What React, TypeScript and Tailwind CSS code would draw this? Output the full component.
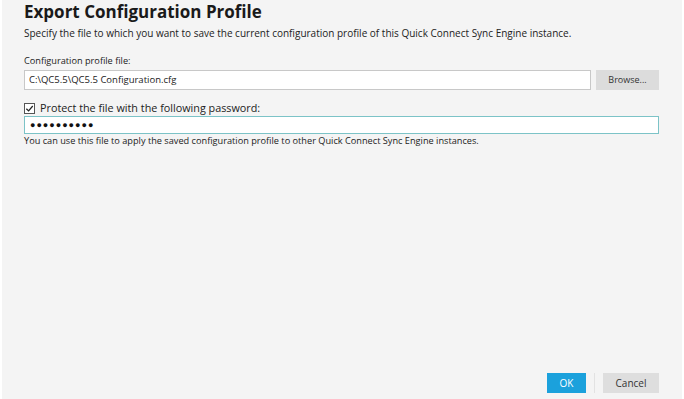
export default function App() {
  return (
    <div
      className="flex h-[399px] w-[684px] flex-col border-x-2 border-white bg-[#f4f4f4] pl-[22px] pr-[23px] text-[#222]"
      style={{ fontFamily: '"Open Sans", "Noto Sans", sans-serif' }}
    >
      <h1 className="mt-[1px] text-[17px] font-bold leading-[21px] text-[#1a1a1a]">
        Export Configuration Profile
      </h1>

      <p className="mt-[4px] text-[10px] leading-[14px]">
        Specify the file to which you want to save the current configuration profile of this Quick Connect Sync Engine instance.
      </p>

      <label className="mt-[14px] text-[9.2px] leading-[14px]">Configuration profile file:</label>

      <div className="mt-[2px] flex gap-[5px]">
        <div className="flex h-[20px] flex-1 items-center border border-[#c8c8c8] bg-white px-[4px] text-[9.5px]">
          C:\QC5.5\QC5.5 Configuration.cfg
        </div>
        <button className="h-[20px] w-[63px] bg-[#dcdcdc] text-[9px] text-[#333]">Browse...</button>
      </div>

      <div className="mt-[11px] flex items-center gap-[5px]">
        <span className="flex h-[11px] w-[11px] items-center justify-center border border-[#555] bg-white">
          <svg viewBox="0 0 10 10" className="h-[9px] w-[9px]">
            <path d="M1.5 5.2 L4 7.6 L8.6 2.2" fill="none" stroke="#222" strokeWidth="1.4" />
          </svg>
        </span>
        <span className="text-[10.8px] leading-[14px]">Protect the file with the following password:</span>
      </div>

      <div className="mt-[1px] flex h-[18px] items-center border border-[#7cc3c7] bg-white px-[5px] text-[9px] tracking-[1px] text-[#111]">
        ●●●●●●●●●●
      </div>

      <p className="text-[9.2px] leading-[13px]">
        You can use this file to apply the saved configuration profile to other Quick Connect Sync Engine instances.
      </p>

      <div className="mt-auto mb-[6px] flex items-center justify-end">
        <button className="h-[20px] w-[39px] bg-[#1ba1dc] text-[10px] text-white">OK</button>
        <span className="mx-[8px] h-[20px] w-px bg-[#e2e2e2]" />
        <button className="h-[20px] w-[56px] bg-[#dedede] text-[10px] text-[#333]">Cancel</button>
      </div>
    </div>
  );
}
